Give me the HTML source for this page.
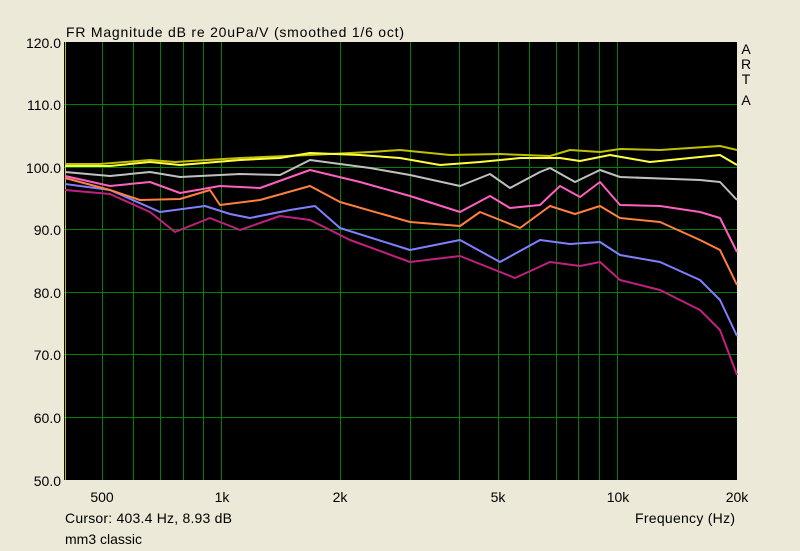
<!DOCTYPE html>
<html><head><meta charset="utf-8"><style>
body{margin:0;width:800px;height:551px;background:#ece9d8;font-family:"Liberation Sans",sans-serif;overflow:hidden}
</style></head><body>
<svg width="800" height="551" xmlns="http://www.w3.org/2000/svg" style="position:absolute;left:0;top:0" font-family="Liberation Sans, sans-serif" font-size="14">
<rect x="64" y="42" width="673" height="438" fill="#000"/>
<g stroke="#008000" stroke-width="1">
<line x1="64" x2="737" y1="104.5" y2="104.5"/><line x1="64" x2="737" y1="167.5" y2="167.5"/><line x1="64" x2="737" y1="229.5" y2="229.5"/><line x1="64" x2="737" y1="292.5" y2="292.5"/><line x1="64" x2="737" y1="354.5" y2="354.5"/><line x1="64" x2="737" y1="417.5" y2="417.5"/>
<line x1="102.5" x2="102.5" y1="42" y2="480"/><line x1="133.5" x2="133.5" y1="42" y2="480"/><line x1="160.5" x2="160.5" y1="42" y2="480"/><line x1="183.5" x2="183.5" y1="42" y2="480"/><line x1="203.5" x2="203.5" y1="42" y2="480"/><line x1="221.5" x2="221.5" y1="42" y2="480"/><line x1="340.5" x2="340.5" y1="42" y2="480"/><line x1="410.5" x2="410.5" y1="42" y2="480"/><line x1="459.5" x2="459.5" y1="42" y2="480"/><line x1="498.5" x2="498.5" y1="42" y2="480"/><line x1="529.5" x2="529.5" y1="42" y2="480"/><line x1="556.5" x2="556.5" y1="42" y2="480"/><line x1="578.5" x2="578.5" y1="42" y2="480"/><line x1="599.5" x2="599.5" y1="42" y2="480"/><line x1="617.5" x2="617.5" y1="42" y2="480"/>
</g>
<line x1="65.5" x2="65.5" y1="42" y2="480" stroke="#c0c000"/>
<g fill="none" stroke-width="2" stroke-linejoin="round">
<polyline stroke="#c02080" points="65,190 110,194 150,212 175,232 210,218 240,230 280,216 310,220 350,240 410,262 460,256 515,278 550,262 580,266 600,262 620,280 660,290 700,310 720,330 737,375"/>
<polyline stroke="#8080ff" points="65,184 110,190 160,212 205,206 230,214 250,218 290,210 315,206 340,228 410,250 460,240 500,262 540,240 570,244 600,242 620,255 660,262 700,280 720,300 737,336"/>
<polyline stroke="#ff8040" points="65,178 110,190 140,200 180,199 210,190 220,205 260,200 310,186 340,202 410,222 460,226 480,212 520,228 550,206 575,214 600,206 620,218 660,222 700,240 720,250 737,285"/>
<polyline stroke="#ff60c0" points="65,176 110,186 150,182 180,193 220,186 260,188 310,170 360,182 410,196 460,212 490,196 510,208 540,205 560,186 580,197 600,182 620,205 660,206 700,212 720,218 737,252"/>
<polyline stroke="#c0c0c0" points="65,172 110,176 150,172 180,177 240,174 280,175 310,160 370,168 410,175 460,186 490,174 510,188 540,172 550,168 575,182 600,170 620,177 700,180 720,182 737,200"/>
<polyline stroke="#c0c000" points="65,164 100,164 150,160 175,162 240,158 310,155 370,152 400,150 450,155 500,154 550,156 570,150 600,152 620,149 660,150 720,146 737,150"/>
<polyline stroke="#ffff40" points="65,166 110,166 150,162 180,165 240,160 280,158 310,153 360,155 400,158 440,165 480,162 520,158 560,158 580,161 610,155 650,162 700,157 720,155 737,165"/>
</g>
<text x="66" y="37" fill="#000" textLength="338" lengthAdjust="spacing">FR Magnitude dB re 20uPa/V (smoothed 1/6 oct)</text>
<g text-anchor="end" fill="#000">
<text x="61" y="48">120.0</text><text x="61" y="110">110.0</text><text x="61" y="173">100.0</text><text x="61" y="235">90.0</text><text x="61" y="298">80.0</text><text x="61" y="360">70.0</text><text x="61" y="423">60.0</text><text x="61" y="486">50.0</text>
</g>
<g text-anchor="middle" fill="#000">
<text x="746" y="54">A</text><text x="746" y="69">R</text><text x="746" y="84">T</text><text x="746" y="105">A</text>
<text x="102" y="502">500</text><text x="222" y="502">1k</text><text x="340" y="502">2k</text><text x="498" y="502">5k</text><text x="618" y="502">10k</text><text x="737" y="502">20k</text>
</g>
<text x="65" y="523" fill="#000" textLength="167" lengthAdjust="spacing">Cursor: 403.4 Hz, 8.93 dB</text>
<text x="65" y="544" fill="#000">mm3 classic</text>
<text x="635" y="523" fill="#000" textLength="100" lengthAdjust="spacing">Frequency (Hz)</text>
</svg>
</body></html>
